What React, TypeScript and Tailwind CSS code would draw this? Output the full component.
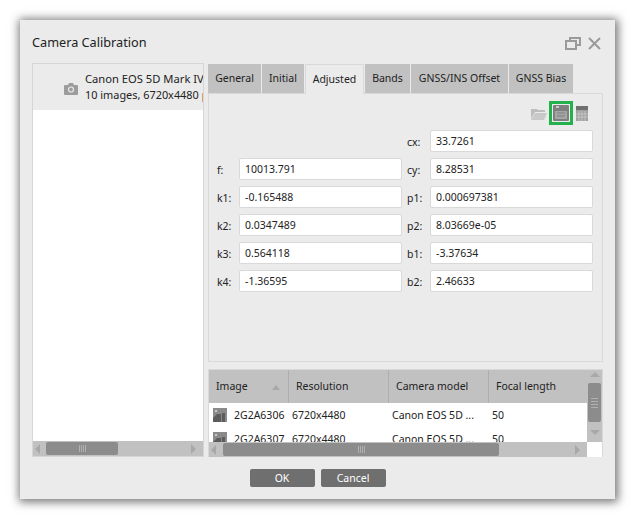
const font = { fontFamily: '"Noto Sans", sans-serif' };

const tabs = [
  { label: "General", w: "w-[53px]" },
  { label: "Initial", w: "w-[42px]" },
  { label: "Adjusted", w: "w-[59px]", active: true },
  { label: "Bands", w: "w-[45px]" },
  { label: "GNSS/INS Offset", w: "w-[97px]" },
  { label: "GNSS Bias", w: "w-[64px]" },
];

const rows = [
  ["f:", "10013.791", "cy:", "8.28531"],
  ["k1:", "-0.165488", "p1:", "0.000697381"],
  ["k2:", "0.0347489", "p2:", "8.03669e-05"],
  ["k3:", "0.564118", "b1:", "-3.37634"],
  ["k4:", "-1.36595", "b2:", "2.46633"],
];

const Field = ({ value }: { value: string }) => (
  <div className="h-[22px] rounded-[2px] border border-[#d9d9d9] bg-white pl-[5px] text-[10.5px] leading-[21px] text-[#222]">
    {value}
  </div>
);

const Arrow = ({ dir }: { dir: "l" | "r" | "u" | "d" }) => {
  const pts = { l: "6,1 6,11 1,6", r: "1,1 1,11 6,6", u: "1,6 11,6 6,1", d: "1,1 11,1 6,6" }[dir];
  return (
    <svg width="12" height="12" viewBox="0 0 12 12" className="shrink-0">
      <polygon points={pts} fill="#a8a8a8" />
    </svg>
  );
};

const HScroll = ({ thumb, left }: { thumb: string; left: string }) => (
  <div className="flex h-[15px] items-center bg-[#c1c1c1] pl-[1px] pr-[1px]">
    <Arrow dir="l" />
    <div className={`${left} flex h-[13px] ${thumb} items-center justify-center gap-[1px] rounded-[2px] bg-[#8c8c8c]`}>
      <span className="h-[7px] w-px bg-[#b0b0b0]" />
      <span className="h-[7px] w-px bg-[#b0b0b0]" />
      <span className="h-[7px] w-px bg-[#b0b0b0]" />
      <span className="h-[7px] w-px bg-[#b0b0b0]" />
    </div>
    <div className="flex-1" />
    <Arrow dir="r" />
  </div>
);

const Thumb = () => (
  <svg width="14" height="14" viewBox="0 0 14 14" className="shrink-0">
    <rect width="14" height="14" fill="#8a8a8a" />
    <rect x="2" y="2" width="2" height="2" fill="#c8c8c8" />
    <path d="M0 10 L4 6 H8 V14 H0 Z" fill="#5c5c5c" />
    <path d="M9 14 V5 H12 V14 Z" fill="#5c5c5c" />
  </svg>
);

const TableRow = ({ name, model }: { name: string; model: string }) => (
  <div className="flex h-[24px] shrink-0 items-center text-[10.5px] text-[#222]">
    <div className="flex w-[83px] items-center gap-[7px] pl-[4px]">
      <Thumb />
      <span className="pt-[1px]">{name}</span>
    </div>
    <div className="w-[100px] pt-[1px]">6720x4480</div>
    <div className="w-[100px] pt-[1px] whitespace-nowrap">{model}</div>
    <div className="pt-[1px]">50</div>
  </div>
);

export default function App() {
  return (
    <div className="h-[518px] w-[634px] bg-white pl-[20px] pt-[20px]" style={font}>
      <div className="flex h-[479px] w-[595px] flex-col bg-[#ebebeb] px-[12px] shadow-[1px_1px_9px_2px_rgba(0,0,0,0.55)]">
        {/* title bar */}
        <div className="flex h-[43px] shrink-0 items-center justify-between pr-[2px] pt-[3px]">
          <span className="text-[12.7px] text-[#222]">Camera Calibration</span>
          <div className="flex items-center gap-[7px]">
            <svg width="16" height="13" viewBox="0 0 16 13" fill="none" stroke="#9a9a9a" strokeWidth="2">
              <rect x="1" y="4" width="10" height="8" />
              <path d="M5 4 V1 H15 V8 H11" />
            </svg>
            <svg width="13" height="13" viewBox="0 0 13 13" fill="none" stroke="#9a9a9a" strokeWidth="2">
              <path d="M1 1 L12 12 M12 1 L1 12" />
            </svg>
          </div>
        </div>

        <div className="flex h-[394px] shrink-0 gap-[4px]">
          {/* camera list */}
          <div className="flex w-[172px] flex-col border border-[#d6d6d6] bg-white">
            <div className="flex h-[46px] shrink-0 items-center overflow-hidden bg-[#ebebeb] pl-[31px] whitespace-nowrap">
              <svg width="14" height="12" viewBox="0 0 14 12" className="mr-[7px] mt-[4px] shrink-0">
                <path d="M1 2 H4 L5 0 H9 L10 2 H13 Q14 2 14 3 V11 Q14 12 13 12 H1 Q0 12 0 11 V3 Q0 2 1 2 Z" fill="#9c9c9c" />
                <circle cx="7" cy="6.5" r="2.5" fill="none" stroke="#ebebeb" strokeWidth="1.2" />
              </svg>
              <div className="leading-[16px] text-[#222]">
                <div className="text-[11.2px]">Canon EOS 5D Mark IV</div>
                <div className="text-[10.9px]">
                  10 images, 6720x4480 <span className="text-[#7a1020]">pixels</span>
                </div>
              </div>
            </div>
            <div className="flex-1" />
            <HScroll thumb="w-[72px]" left="ml-0" />
          </div>

          {/* right side */}
          <div className="flex w-[395px] flex-col">
            <div className="mt-[1px] flex h-[29px] shrink-0 gap-px">
              {tabs.map((t) => (
                <div
                  key={t.label}
                  className={`${t.w} ${
                    t.active
                      ? "relative z-10 h-[30px] border border-b-0 border-[#d9d9d9] bg-[#ebebeb]"
                      : "bg-[#c1c1c1]"
                  } text-center text-[10.5px] leading-[28px] whitespace-nowrap text-[#222]`}
                >
                  {t.label}
                </div>
              ))}
            </div>

            <div className="h-[269px] shrink-0 border border-[#d9d9d9] pl-[8px] pr-[9px]">
              {/* toolbar */}
              <div className="flex h-[36px] items-center justify-end gap-[3px] pr-[5px] pt-[2px]">
                <svg width="16" height="13" viewBox="0 0 16 13" className="-mr-[1px]">
                  <path d="M0 2 H6 L7 3 H14 V5 H4 L0 12 Z" fill="#bdbdbd" />
                  <path d="M4 6 H16 L13 13 H0 Z" fill="#c9c9c9" />
                </svg>
                <div className="flex h-[24px] w-[24px] items-center justify-center border-[3px] border-[#22b14c]">
                  <svg width="16" height="16" viewBox="0 0 16 16">
                    <path d="M0 1 Q0 0 1 0 H15 Q16 0 16 1 V15 Q16 16 15 16 H1 Q0 16 0 15 Z" fill="#7f7f7f" />
                    <rect x="3" y="1" width="3" height="2" fill="#c8c8c8" />
                    <rect x="2" y="6" width="12" height="8" fill="#a6a6a6" />
                    <path d="M4 8 H12 M4 11 H12" stroke="#7f7f7f" />
                  </svg>
                </div>
                <svg width="12" height="15" viewBox="0 0 12 15">
                  <rect width="12" height="15" fill="#a0a0a0" />
                  <rect width="12" height="4" fill="#707070" />
                  <path d="M3 5 V15 M6 5 V15 M9 5 V15 M0 8 H12 M0 11 H12" stroke="#c4c4c4" />
                </svg>
              </div>

              {/* parameters */}
              <div className="grid grid-cols-[22px_163px_28px_163px] items-center gap-y-[6px] text-[10.5px] leading-[18px] text-[#222]">
                <span />
                <span />
                <span className="pl-[5px] pt-[2px]">cx:</span>
                <Field value="33.7261" />
                {rows.map((r) => [
                  <span key={r[0]} className="pt-[2px]">{r[0]}</span>,
                  <Field key={r[1]} value={r[1]} />,
                  <span key={r[2]} className="pl-[5px] pt-[2px]">{r[2]}</span>,
                  <Field key={r[3]} value={r[3]} />,
                ])}
              </div>
            </div>

            {/* image table */}
            <div className="mt-[7px] flex h-[88px] shrink-0 flex-col border border-[#d9d9d9] bg-white">
              <div className="flex h-[72px] shrink-0">
                <div className="flex flex-1 flex-col overflow-hidden">
                  <div className="flex h-[33px] shrink-0 items-center bg-[#c1c1c1] text-[10.5px] text-[#222]">
                    <div className="flex h-full w-[80px] items-center justify-between border-r border-[#aeaeae] pl-[7px] pr-[8px] pt-[1px]">
                      Image
                      <svg width="8" height="5" viewBox="0 0 8 5">
                        <polygon points="0,5 8,5 4,0" fill="#a8a8a8" />
                      </svg>
                    </div>
                    <div className="flex h-full w-[100px] items-center border-r border-[#aeaeae] pl-[7px] pt-[1px]">Resolution</div>
                    <div className="flex h-full w-[100px] items-center border-r border-[#aeaeae] pl-[7px] pt-[1px]">Camera model</div>
                    <div className="pl-[7px] pt-[1px] whitespace-nowrap">Focal length</div>
                  </div>
                  <TableRow name="2G2A6306" model="Canon EOS 5D ..." />
                  <TableRow name="2G2A6307" model="Canon EOS 5D ..." />
                </div>
                <div className="flex w-[15px] shrink-0 flex-col items-center bg-[#c1c1c1] py-[1px]">
                  <Arrow dir="u" />
                  <div className="flex h-[39px] w-[13px] flex-col items-center justify-center gap-[2px] rounded-[2px] bg-[#8c8c8c]">
                    <span className="h-px w-[7px] bg-[#b0b0b0]" />
                    <span className="h-px w-[7px] bg-[#b0b0b0]" />
                    <span className="h-px w-[7px] bg-[#b0b0b0]" />
                    <span className="h-px w-[7px] bg-[#b0b0b0]" />
                  </div>
                  <div className="flex-1" />
                  <Arrow dir="d" />
                </div>
              </div>
              <div className="flex">
                <div className="flex-1">
                  <HScroll thumb="w-[276px]" left="ml-[1px]" />
                </div>
                <div className="w-[15px] bg-white" />
              </div>
            </div>
          </div>
        </div>

        {/* footer */}
        <div className="mt-[12px] flex justify-center gap-[6px] text-[10.5px] text-white">
          <div className="flex h-[18px] w-[65px] items-center justify-center rounded-[2px] bg-[#6f6f6f] pt-[2px]">OK</div>
          <div className="flex h-[18px] w-[65px] items-center justify-center rounded-[2px] bg-[#6f6f6f] pt-[2px]">Cancel</div>
        </div>
      </div>
    </div>
  );
}
